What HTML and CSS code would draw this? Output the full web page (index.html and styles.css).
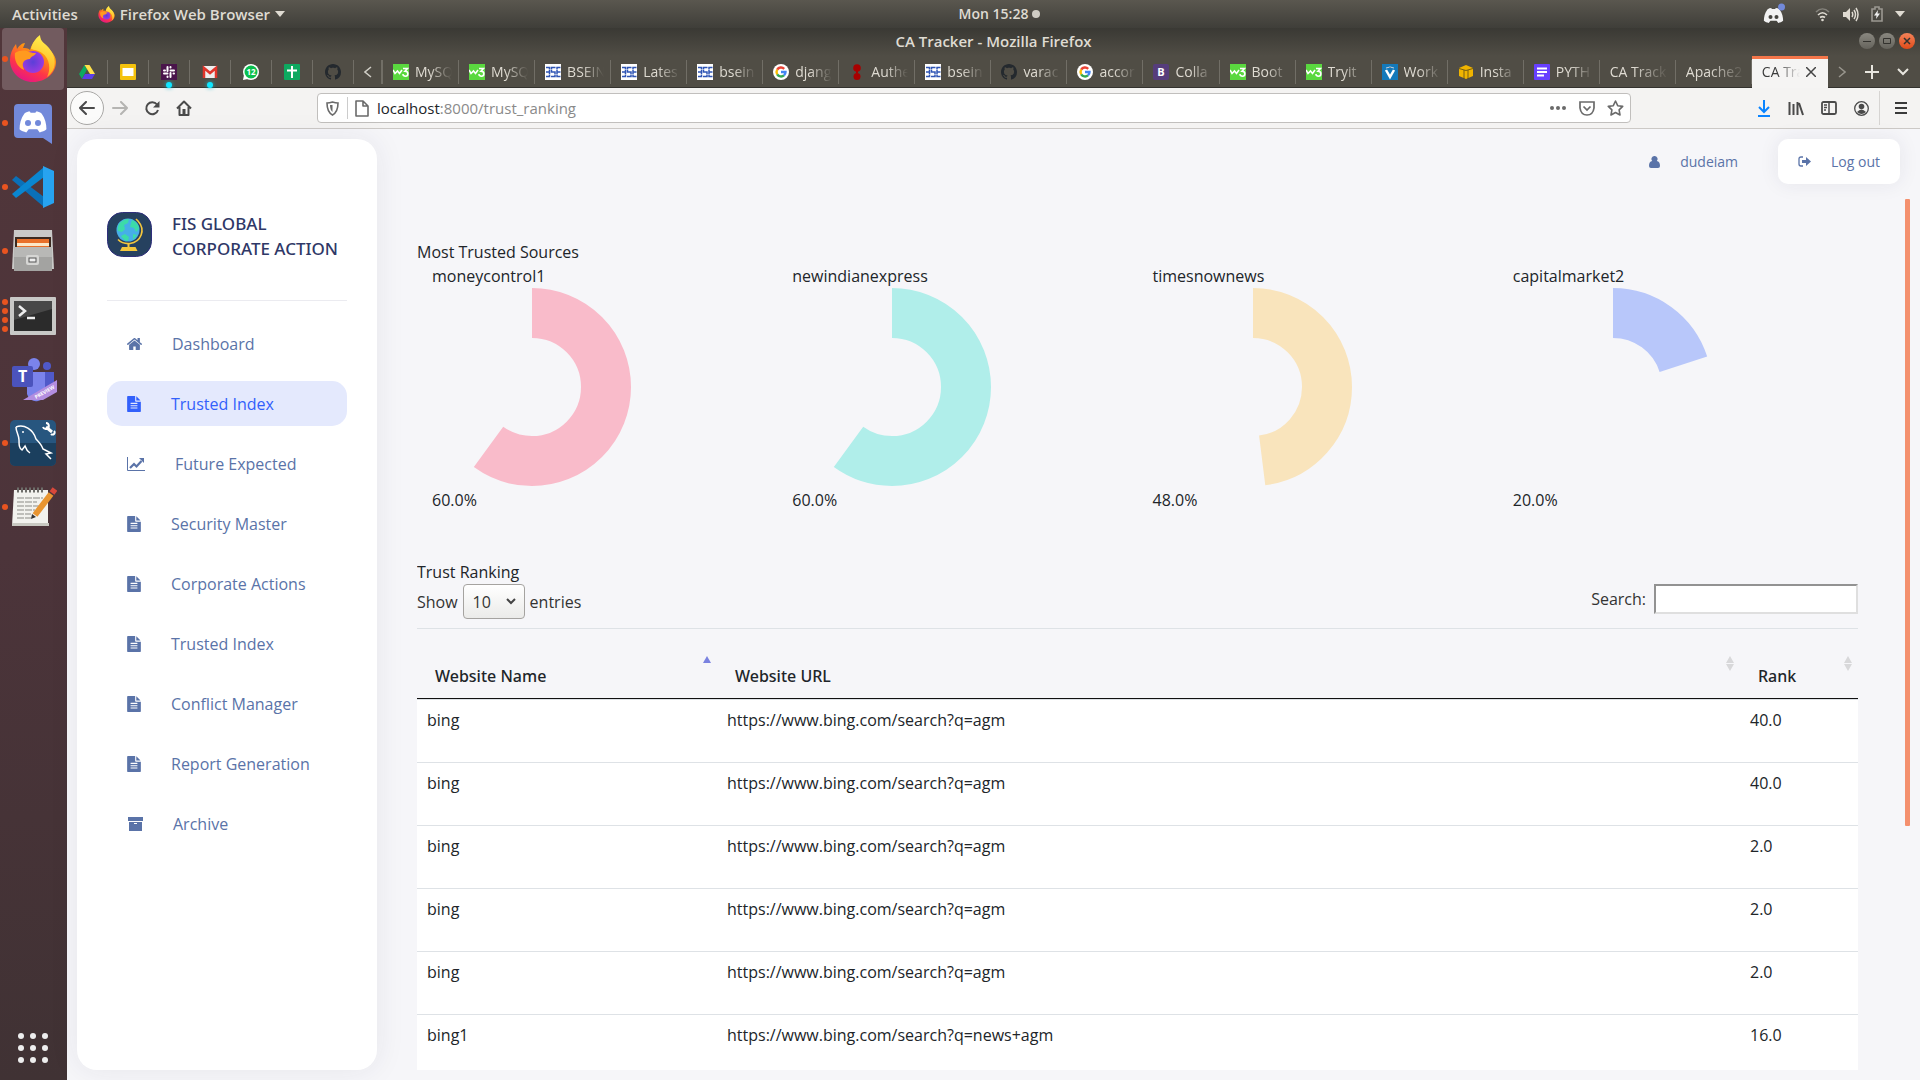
FILE: index.html
```html
<!DOCTYPE html>
<html lang="en">
<head>
<meta charset="utf-8">
<title>CA Tracker</title>
<link rel="stylesheet" href="styles.css">
</head>
<body>
<svg class="sprite" aria-hidden="true">
  <defs>
    <linearGradient id="fx-body" x1="0.8" y1="0" x2="0.3" y2="1"><stop offset="0" stop-color="#fff44f"/><stop offset="0.35" stop-color="#ff980e"/><stop offset="0.7" stop-color="#ff3647"/><stop offset="1" stop-color="#e31587"/></linearGradient>
    <radialGradient id="fx-core"><stop offset="0" stop-color="#5b3fd8"/><stop offset="1" stop-color="#9a3be0"/></radialGradient>
    <linearGradient id="fx-flame" x1="0.6" y1="0" x2="0.4" y2="1"><stop offset="0" stop-color="#fff44f"/><stop offset="1" stop-color="#ffa61b"/></linearGradient>
    <symbol id="firefox" viewBox="0 0 48 48">
      <path fill="url(#fx-body)" d="M24 47C11 47 1 37 1 25c0-6 2-11 6-16l1 5c2-3 5-6 8-6l-2 5c2 0 5 0 7 2 2-6 5-11 10-14 0 7 5 8 9 13 4 4 7 8 7 13 0 11-10 20-23 20z"/>
      <path fill="url(#fx-flame)" d="M22 14C23 8 27 3 31 0c0 7 5 8 9 13 8 10 8 22-2 29 4-7 3-19-5-24-4-3-8-3-11-4z"/>
      <circle cx="24" cy="27" r="11" fill="url(#fx-core)"/>
      <path fill="#ff9a1f" d="M6 18c5-3 10-3 14-1 3 1 5 1 7 1-1 3-5 3-6 6-3 0-6 1-7 4-1 3 1 5 1 7C8 32 5 25 6 18z"/>
    </symbol>
    <symbol id="discord-face" viewBox="0 0 48 36">
      <path d="M10 4C13 2 16 1 19 1l1 2h8l1-2c3 0 6 1 9 3 6 8 8 17 8 26-3 3-7 4-11 5l-3-4-1-1H17l-4 5C9 34 5 33 2 30 2 21 4 12 10 4z"/>
    </symbol>
    <symbol id="file" viewBox="128 0 1536 1792"><path fill="currentColor" d="M1596 476q14 14 28 36h-472v-472q22 14 36 28zm-476 164h544v1056q0 40-28 68t-68 28h-1344q-40 0-68-28t-28-68v-1600q0-40 28-68t68-28h800v544q0 40 28 68t68 28zm160 736v-64q0-14-9-23t-23-9h-704q-14 0-23 9t-9 23v64q0 14 9 23t23 9h704q14 0 23-9t9-23zm0-256v-64q0-14-9-23t-23-9h-704q-14 0-23 9t-9 23v64q0 14 9 23t23 9h704q14 0 23-9t9-23zm0-256v-64q0-14-9-23t-23-9h-704q-14 0-23 9t-9 23v64q0 14 9 23t23 9h704q14 0 23-9t9-23z"/></symbol>
    <symbol id="github" viewBox="0 0 16 16"><path fill="#24292e" d="M8 0C3.58 0 0 3.58 0 8c0 3.54 2.29 6.53 5.47 7.59.4.07.55-.17.55-.38 0-.19-.01-.82-.01-1.49-2.01.37-2.53-.49-2.69-.94-.09-.23-.48-.94-.82-1.13-.28-.15-.68-.52-.01-.53.63-.01 1.08.58 1.23.82.72 1.21 1.87.87 2.33.66.07-.52.28-.87.51-1.07-1.78-.2-3.64-.89-3.64-3.95 0-.87.31-1.59.82-2.15-.08-.2-.36-1.02.08-2.12 0 0 .67-.21 2.2.82.64-.18 1.32-.27 2-.27s1.36.09 2 .27c1.53-1.04 2.2-.82 2.2-.82.44 1.1.16 1.92.08 2.12.51.56.82 1.27.82 2.15 0 3.07-1.87 3.75-3.65 3.95.29.25.54.73.54 1.48 0 1.07-.01 1.93-.01 2.2 0 .21.15.46.55.38A8.01 8.01 0 0 0 16 8c0-4.42-3.58-8-8-8z"/></symbol>
    <symbol id="w3" viewBox="0 0 16 16"><rect width="16" height="16" fill="#5ad83f"/><path fill="none" stroke="#fff" stroke-width="1.600" d="M0 6l2 3.500L4.500 7l2 2.500L9 6M10 4.500h4.500l-2.500 2.700c4 0 3.500 5 .5 5-2 0-2.500-1-2.700-2"/></symbol>
    <symbol id="bse" viewBox="0 0 16 16"><rect width="16" height="16" fill="#fff"/><path fill="none" stroke="#2f55b5" stroke-width="1.500" d="M1 3.500h3.500v9H1M1 8h3.500M10.500 3.500H6.500V8H10v4.500H6M15.500 3.500h-3.500v9h3.500M12 8h3.500"/><path stroke="#fff" stroke-width=".5" d="M0 5.500h16M0 10.500h16"/></symbol>
    <symbol id="google" viewBox="0 0 16 16"><circle cx="8" cy="8" r="8" fill="#fff"/><g fill="none" stroke-width="2.400"><path stroke="#ea4335" d="M11.200 4.800A4.500 4.500 0 0 0 4.200 5.700"/><path stroke="#fbbc05" d="M4.200 5.700a4.500 4.500 0 0 0 0 4.600"/><path stroke="#34a853" d="M4.200 10.300a4.500 4.500 0 0 0 6.800 1.100"/><path stroke="#4285f4" d="M11 11.400A4.500 4.500 0 0 0 12.500 8H8"/></g></symbol>
  </defs>
</svg>

<div class="desktop">
  <header class="topbar">
    <div class="topbar-left">
      <button class="plain">Activities</button>
      <button class="plain app-menu"><svg width="17" height="17"><use href="#firefox"/></svg>Firefox Web Browser<svg width="10" height="6"><path fill="currentColor" d="M0 0h10L5 6z"/></svg></button>
    </div>
    <div class="clock">Mon 15:28<span class="clock-dot"></span></div>
    <div class="tray">
      <svg class="tray-discord" width="22" height="22" viewBox="0 0 22 22"><use href="#discord-face" x="0" y="3" width="21" height="19" fill="#f2f2f2"/><circle cx="7.500" cy="14" r="2" fill="#45443f"/><circle cx="13.500" cy="14" r="2" fill="#45443f"/><circle cx="18.500" cy="4" r="3.500" fill="#7289da"/></svg>
      <svg width="15" height="15" viewBox="0 0 15 15" fill="none" stroke="#dfdbd2" stroke-width="1.600"><path stroke="#85837c" d="M1 5c4-4 9-4 13 0"/><path d="M3 8c3-3 6-3 9 0M5 10.500c2-1.500 3-1.500 5 0"/><circle cx="7.500" cy="13" r="1.300" fill="#dfdbd2" stroke="none"/></svg>
      <svg width="17" height="15" viewBox="0 0 17 15"><path fill="#dfdbd2" d="M1 5h3l4-4v13l-4-4H1z"/><path fill="none" stroke="#dfdbd2" stroke-width="1.500" d="M10 5q1.500 2.500 0 5M12 3q3 4.500 0 9M14 1q4 6.500 0 13"/></svg>
      <svg width="12" height="16" viewBox="0 0 12 16"><path fill="none" stroke="#9b9891" stroke-width="1.600" d="M1 3h3V1h4v2h3v12H1z"/><path fill="#eee" d="M7 4L3 9.500h2.500L5 13l4-5.500H6.500z"/></svg>
      <svg width="10" height="6"><path fill="#dfdbd2" d="M0 0h10L5 6z"/></svg>
    </div>
  </header>

  <nav class="dock" aria-label="Dock">
    <button class="dock-item active" aria-label="Firefox"><span class="pips"><i></i></span><svg width="48" height="48"><use href="#firefox"/></svg></button>
    <button class="dock-item" aria-label="Discord"><span class="pips"><i></i></span>
      <svg width="48" height="48" viewBox="0 0 48 48"><path fill="#7289da" d="M9 5h30a4 4 0 0 1 4 4v36l-9-6H9a4 4 0 0 1-4-4V9a4 4 0 0 1 4-4z"/><use href="#discord-face" x="9" y="12" width="30" height="22" fill="#fff"/><circle cx="19" cy="24" r="3" fill="#7289da"/><circle cx="29" cy="24" r="3" fill="#7289da"/></svg></button>
    <button class="dock-item" aria-label="Visual Studio Code"><span class="pips"><i></i></span>
      <svg width="48" height="48" viewBox="0 0 48 48"><path fill="#0a70b8" d="M3 17l4-4 28 21v10z"/><path fill="#0a86d0" d="M3 31l4 4 28-21V4z"/><path fill="#27a3f0" d="M34 3l11 5v32l-11 5z"/></svg></button>
    <button class="dock-item" aria-label="Files"><span class="pips"><i></i></span>
      <svg width="48" height="48" viewBox="0 0 48 48"><path fill="#c9c9c7" d="M5 3h38l2 39H3z"/><path fill="#3b2a20" d="M6 10h36v10H6z"/><path fill="#e8702a" d="M8 12h32v8H8z"/><path fill="#fbe7c8" d="M8 16h32v3H8z"/><path fill="#a3a3a1" d="M5 20h38v24H5z"/><path fill="#b8b8b6" d="M5 20h38v10H5z"/><rect x="17" y="28" width="13" height="10" rx="2" fill="#d6d6d4"/><rect x="20" y="31" width="7" height="4" fill="#eee" stroke="#555"/></svg></button>
    <button class="dock-item" aria-label="Terminal"><span class="pips"><i></i><i></i><i></i><i></i></span>
      <svg width="48" height="48" viewBox="0 0 48 48"><rect x="1" y="6" width="46" height="38" rx="1" fill="#c8c8c6"/><rect x="5" y="10" width="38" height="30" fill="#2b2b2b"/><path fill="#484848" d="M5 10h38v8L5 29z"/><path fill="none" stroke="#eee" stroke-width="2.500" d="M10 15l6 5-6 5M18 27h8"/></svg></button>
    <button class="dock-item" aria-label="Teams"><span class="pips"></span>
      <svg width="48" height="48" viewBox="0 0 48 48"><circle cx="25" cy="9" r="6" fill="#7b83eb"/><circle cx="38" cy="11" r="4" fill="#5059c9"/><path fill="#5059c9" d="M34 17h11v16a8 8 0 0 1-11 7z"/><path fill="#7b83eb" d="M18 17h18v18a9 9 0 0 1-18 4z"/><rect x="3" y="11" width="21" height="21" rx="2" fill="#4b53bc"/><text x="9" y="27" font-family="Open Sans" font-weight="700" font-size="16" fill="#fff">T</text><path fill="#b38ee0" d="M14 45L48 25v12L34 45z"/><text x="27" y="44" font-family="Open Sans" font-weight="700" font-size="5" fill="#fff" transform="rotate(-30 27 44)">PREVIEW</text></svg></button>
    <button class="dock-item" aria-label="MySQL Workbench"><span class="pips"><i></i></span>
      <svg width="48" height="48" viewBox="0 0 48 48"><rect x="1" y="1" width="46" height="46" rx="5" fill="#27567f"/><path fill="#1b3f5e" d="M1 24h46v18a5 5 0 0 1-5 5H6a5 5 0 0 1-5-5z"/><path fill="none" stroke="#fff" stroke-width="1.500" d="M7 8c8-3 17 2 20 12 3 3 6 7 7 10l8 4-5 1 5 5M7 8c0 5 3 8 3 13 0 5 0 8 3 10l3-4c1 3 2 5 5 7"/><circle cx="14" cy="13" r="1" fill="#fff"/><path stroke="#fff" stroke-width="3" d="M37 8l6 5"/><path fill="none" stroke="#fff" stroke-width="2" d="M34 8a3 3 0 1 0 3-4M42 15a2 2 0 1 0 3-3"/></svg></button>
    <button class="dock-item" aria-label="Notes"><span class="pips"><i></i></span>
      <svg width="48" height="48" viewBox="0 0 48 48"><path fill="#f2f2ee" d="M5 7h34v36H3z"/><path fill="#c9c9c2" d="M3 40h37v3H3z"/><path fill="none" stroke="#8b8b86" stroke-dasharray="7 1" d="M8 15h26M8 19h20M8 23h24M8 27h18M8 31h14M8 35h14"/><path stroke="#6e6e6a" stroke-width="5" stroke-dasharray="2 2" d="M8 7h28"/><path stroke="#e89531" stroke-width="6" d="M26 32L42 11"/><path stroke="#d8483b" stroke-width="6" d="M43 10l3-4"/><path fill="#333" d="M22 36l1-5 4 3z"/></svg></button>
    <button class="show-apps" aria-label="Show applications"><i></i><i></i><i></i><i></i><i></i><i></i><i></i><i></i><i></i></button>
  </nav>

  <section class="window">
    <div class="titlebar">
      <span class="window-title">CA Tracker - Mozilla Firefox</span>
      <div class="window-buttons">
        <button aria-label="Minimise"><svg width="8" height="8"><path stroke="#33322e" d="M0 4.500h8"/></svg></button>
        <button aria-label="Maximise"><svg width="8" height="8"><path fill="none" stroke="#33322e" d="M.5 1.500h7v5h-7z"/></svg></button>
        <button class="close" aria-label="Close"><svg width="8" height="8"><path stroke="#33322e" stroke-width="1.500" d="M1 1l6 6M7 1L1 7"/></svg></button>
      </div>
    </div>

    <div class="tabstrip">
      <div class="pinned"><svg width="16" height="16" viewBox="0 0 16 16"><path fill="#0da960" d="M5.500 1L8 5.500 3 15 0 10z"/><path fill="#ffe14a" d="M5.500 1h5l5.500 9h-5z"/><path fill="#5b3fe8" d="M6 10h10l-3 5H3z"/></svg></div>
      <div class="pinned"><svg width="16" height="16" viewBox="0 0 16 16"><rect width="16" height="16" rx="1" fill="#f4c20d"/><rect x="2.500" y="4" width="11" height="8" fill="#fff"/></svg></div>
      <div class="pinned notify"><svg width="16" height="16" viewBox="0 0 16 16"><rect width="16" height="16" fill="#4a154b"/><path stroke="#fff" stroke-width="2" stroke-linecap="round" d="M6.500 3v4M3 6.500h1M9.500 3v.5M9.500 6.500H13M9.500 9v4M12.500 9.500h.5M3 9.500h3.500M6.500 12.500v.5"/></svg></div>
      <div class="pinned notify"><svg width="16" height="16" viewBox="0 0 16 16"><rect x="1" y="2" width="14" height="12" fill="#eee"/><path fill="none" stroke="#e0352b" stroke-width="2.500" d="M2 14V4l6 5 6-5v10"/></svg></div>
      <div class="pinned"><svg width="16" height="16" viewBox="0 0 16 16"><circle cx="8" cy="8" r="8" fill="#fff"/><path fill="#fff" d="M0 16l1-5 4 4z"/><circle cx="8" cy="8" r="6.500" fill="#0abf4e"/><text x="8" y="11" text-anchor="middle" font-family="Open Sans" font-weight="700" font-size="8" fill="#fff">12</text></svg></div>
      <div class="pinned"><svg width="16" height="16" viewBox="0 0 16 16"><rect width="16" height="16" rx="1" fill="#0da960"/><path stroke="#fff" stroke-width="2" d="M8 2v12M3 6.500h10"/></svg></div>
      <div class="pinned"><svg width="16" height="16"><use href="#github"/></svg></div>
      <button class="scroll-left" aria-label="Scroll tabs left"><svg width="8" height="12"><path fill="none" stroke="#d0cec6" stroke-width="1.500" d="M7 1L1 6l6 5"/></svg></button>
      <div class="tabs">
        <div class="tab"><svg width="16" height="16"><use href="#w3"/></svg><span>MySQ</span></div>
        <div class="tab"><svg width="16" height="16"><use href="#w3"/></svg><span>MySQ</span></div>
        <div class="tab"><svg width="16" height="16"><use href="#bse"/></svg><span>BSEIN</span></div>
        <div class="tab"><svg width="16" height="16"><use href="#bse"/></svg><span>Lates</span></div>
        <div class="tab"><svg width="16" height="16"><use href="#bse"/></svg><span>bsein</span></div>
        <div class="tab"><svg width="16" height="16"><use href="#google"/></svg><span>djang</span></div>
        <div class="tab"><svg width="16" height="16" viewBox="0 0 16 16"><circle cx="8" cy="4" r="3.800" fill="#a80000"/><circle cx="8" cy="12.500" r="3.500" fill="#a80000"/><path stroke="#a80000" stroke-width="2" d="M8 7v2"/></svg><span>Authe</span></div>
        <div class="tab"><svg width="16" height="16"><use href="#bse"/></svg><span>bsein</span></div>
        <div class="tab"><svg width="16" height="16"><use href="#github"/></svg><span>varac</span></div>
        <div class="tab"><svg width="16" height="16"><use href="#google"/></svg><span>accor</span></div>
        <div class="tab"><svg width="16" height="16" viewBox="0 0 16 16"><rect width="16" height="16" rx="2" fill="#563d7c"/><text x="8" y="12" text-anchor="middle" font-family="Open Sans" font-weight="700" font-size="11" fill="#fff">B</text></svg><span>Colla</span></div>
        <div class="tab"><svg width="16" height="16"><use href="#w3"/></svg><span>Boot</span></div>
        <div class="tab"><svg width="16" height="16"><use href="#w3"/></svg><span>Tryit</span></div>
        <div class="tab"><svg width="16" height="16" viewBox="0 0 16 16"><rect width="16" height="16" fill="#1479ba"/><path fill="none" stroke="#fff" stroke-width="2.500" d="M4 6l4 7 4-7"/><path stroke="#cde" d="M4 4q4-2 8 0"/></svg><span>Work</span></div>
        <div class="tab"><svg width="16" height="16" viewBox="0 0 16 16"><path fill="#f0b400" d="M1 4l7-3 7 3v8l-7 3-7-3z"/><path fill="none" stroke="#5b4a16" stroke-width=".8" d="M1 4.500l7 2 7-2M6 6v9M10 6v9"/></svg><span>Insta</span></div>
        <div class="tab"><svg width="16" height="16" viewBox="0 0 16 16"><rect width="16" height="16" rx="1" fill="#673fff"/><path stroke="#fff" stroke-width="1.800" d="M3 4.500h10M3 8h10M3 11.500h7"/></svg><span>PYTH</span></div>
        <div class="tab"><span>CA Track</span></div>
        <div class="tab"><span>Apache2</span></div>
        <div class="tab current"><span>CA Tra</span><button class="plain" aria-label="Close tab"><svg width="10" height="10"><path stroke="#444" stroke-width="1.500" d="M0 0l10 10M10 0L0 10"/></svg></button></div>
      </div>
      <div class="tab-tools">
        <button class="plain" aria-label="Scroll tabs right"><svg width="8" height="12"><path fill="none" stroke="#98958d" stroke-width="1.500" d="M1 1l6 5-6 5"/></svg></button>
        <button class="plain" aria-label="New tab"><svg width="14" height="14"><path stroke="#e8e6df" stroke-width="2" d="M7 0v14M0 7h14"/></svg></button>
        <button class="plain" aria-label="List tabs"><svg width="12" height="8"><path fill="none" stroke="#e8e6df" stroke-width="2" d="M1 1l5 5 5-5"/></svg></button>
      </div>
    </div>

    <div class="toolbar">
      <div class="nav-buttons">
        <button class="back" aria-label="Back"><svg width="16" height="14"><path fill="none" stroke="#4a4a4a" stroke-width="2" stroke-linecap="round" d="M15 7H1M7 1L1 7l6 6"/></svg></button>
        <button class="plain" aria-label="Forward"><svg width="16" height="14"><path fill="none" stroke="#b5b4b2" stroke-width="2" stroke-linecap="round" d="M1 7h14M9 1l6 6-6 6"/></svg></button>
        <button class="plain" aria-label="Reload"><svg width="16" height="16"><path fill="none" stroke="#4a4a4a" stroke-width="2" d="M13 4.500A6 6 0 1 0 14 10"/><path fill="#4a4a4a" d="M15.500 1v6.500H9z"/></svg></button>
        <button class="plain" aria-label="Home"><svg width="16" height="16"><path fill="none" stroke="#4a4a4a" stroke-width="2" stroke-linejoin="round" d="M1 8.500L8 1.500l7 7M3.500 7v8h9V7"/><path fill="#4a4a4a" d="M6.500 9h3v6h-3z"/></svg></button>
      </div>
      <div class="urlbar">
        <svg width="13" height="15"><path fill="none" stroke="#6a6a6a" stroke-width="1.600" d="M6.500 1q3 1 5.500 1 0 9-5.500 12Q1 11 1 2q2.500 0 5.500-1z"/><path fill="#6a6a6a" d="M6.500 4H4q0 5 2.500 7z"/></svg>
        <span class="url-split"></span>
        <svg width="15" height="17"><path fill="none" stroke="#6a6a6a" stroke-width="1.600" stroke-linejoin="round" d="M2 1h7l5 5v10H2zM9 1v5h5"/></svg>
        <div class="url" role="textbox" aria-label="Address">localhost<span>:8000/trust_ranking</span></div>
        <svg width="18" height="4"><g fill="#6a6a6a"><circle cx="3" cy="2" r="2"/><circle cx="9" cy="2" r="2"/><circle cx="15" cy="2" r="2"/></g></svg>
        <svg width="16" height="15"><path fill="none" stroke="#6a6a6a" stroke-width="1.700" d="M1 1h14v6q-1 7-7 7T1 7zM4.500 5.500L8 9l3.500-3.500"/></svg>
        <svg width="17" height="16"><path fill="none" stroke="#6a6a6a" stroke-width="1.600" stroke-linejoin="round" d="M8.500 1l2.200 4.700 5 .7-3.600 3.500.9 5.100-4.500-2.500L4 15l.9-5.100L1.300 6.400l5-.7z"/></svg>
      </div>
      <div class="tool-buttons">
        <button class="plain" aria-label="Downloads"><svg width="14" height="17"><path fill="none" stroke="#0a84ff" stroke-width="2" d="M7 0v12M2 7l5 5 5-5M1 16h12"/></svg></button>
        <button class="plain" aria-label="Library"><svg width="16" height="15"><path stroke="#4a4a4a" stroke-width="2" d="M1.500 1v13M5.500 3v11M9.500 1v13M11 2l4 12"/></svg></button>
        <button class="plain" aria-label="Sidebars"><svg width="16" height="14"><rect x="1" y="1" width="14" height="12" rx="1.500" fill="none" stroke="#4a4a4a" stroke-width="1.800"/><path stroke="#4a4a4a" stroke-width="1.500" d="M8 1v12M3 4h3M3 6.500h3M3 9h2"/></svg></button>
        <button class="plain" aria-label="Account"><svg width="15" height="15"><circle cx="7.500" cy="7.500" r="6.800" fill="none" stroke="#4a4a4a" stroke-width="1.300"/><circle cx="7.500" cy="5.500" r="2.800" fill="#4a4a4a"/><path fill="#4a4a4a" d="M3 11q4.500-5 9 0-4.500 4-9 0z"/></svg></button>
        <span class="tool-split"></span>
        <button class="plain" aria-label="Menu"><svg width="12" height="12"><path stroke="#3a3a3a" stroke-width="2" d="M0 1h12M0 6h12M0 11h12"/></svg></button>
      </div>
    </div>

    <div class="page">
      <aside class="sidebar">
        <div class="brand">
          <svg width="45" height="45" viewBox="0 0 45 45"><rect x=".5" y=".5" width="44" height="44" rx="15" fill="#26415f" stroke="#2f2f7c"/><path fill="none" stroke="#f5c73c" stroke-width="1.600" d="M29 7l2 2c8 9 3 21-8 22.500-5 .5-9-1-12-4"/><circle cx="21" cy="18" r="11.500" fill="#46aee8"/><path fill="#3cdba8" d="M12 12c3-4 7-5 10-5l-1 4-4 2 1 4-3 3-4-1c-1-2 0-5 1-7zM25 8c5 2 7 6 7 9l-3 3-2-4-4-1 1-4zM14 24l4-2 4 3-1 4c-3 0-5-2-7-5zM26 22l4 1-4 5z"/><path fill="#f5c73c" d="M20.500 31h2v4h6l2 4H13l2-4h5.500z"/></svg>
          <h1>FIS GLOBAL<br>CORPORATE ACTION</h1>
        </div>
        <nav class="menu">
          <a href="#dashboard"><svg width="15" height="12" viewBox="96 256 1600 1280"><path fill="currentColor" d="M1472 992v480q0 26-19 45t-45 19h-384v-384h-256v384h-384q-26 0-45-19t-19-45v-480q0-1 .5-3t.5-3l575-474 575 474q1 2 1 6zm223-69l-62 74q-8 9-21 11h-3q-13 0-21-7l-692-577-692 577q-12 8-24 7-13-2-21-11l-62-74q-8-10-7-23.500t11-21.500l719-599q32-26 76-26t76 26l244 204v-195q0-14 9-23t23-9h192q14 0 23 9t9 23v408l219 182q10 8 11 21.500t-7 23.500z"/></svg>Dashboard</a>
          <a href="#trusted" class="selected"><svg width="14" height="16"><use href="#file"/></svg>Trusted Index</a>
          <a href="#future"><svg width="18" height="14"><path fill="none" stroke="currentColor" d="M.5 0v13.500H18"/><path fill="none" stroke="currentColor" stroke-width="2.200" d="M3 11l4-4 2.500 2.500 5-5.500"/><path fill="currentColor" d="M17 1v5l-5-5z"/></svg>Future Expected</a>
          <a href="#security"><svg width="14" height="16"><use href="#file"/></svg>Security Master</a>
          <a href="#actions"><svg width="14" height="16"><use href="#file"/></svg>Corporate Actions</a>
          <a href="#index"><svg width="14" height="16"><use href="#file"/></svg>Trusted Index</a>
          <a href="#conflict"><svg width="14" height="16"><use href="#file"/></svg>Conflict Manager</a>
          <a href="#report"><svg width="14" height="16"><use href="#file"/></svg>Report Generation</a>
          <a href="#archive"><svg width="16" height="14"><path fill="currentColor" d="M1 0h15v4H1z"/><path fill="currentColor" fill-rule="evenodd" d="M2 5h13v9H2zM7 6v1h3V6z"/></svg>Archive</a>
        </nav>
      </aside>

      <div class="content">
        <div class="account-bar">
          <a class="account" href="#profile"><svg width="11" height="12"><path fill="currentColor" d="M5.500 0a3 3 0 0 1 2.300 5C10 5.500 11 7 11 10q0 2-2 2H2q-2 0-2-2c0-3 1-4.500 3.200-5A3 3 0 0 1 5.500 0z"/></svg>dudeiam</a>
          <button class="logout"><svg width="13" height="11"><path fill="none" stroke="currentColor" stroke-width="1.300" d="M5 1H3Q1 1 1 3v5q0 2 2 2h2"/><path fill="currentColor" d="M4 4h4V1l5 4.500L8 10V7H4z"/></svg>Log out</button>
        </div>
        <div class="viewport">
          <main class="scroller">
            <h2>Most Trusted Sources</h2>
            <div class="sources">
              <section class="source"><h3>moneycontrol1</h3><svg viewBox="0 0 200 200"><circle class="arc" stroke="#f9bbca" pathLength="100" stroke-dasharray="60 100" cx="100" cy="99" r="74" transform="rotate(-90 100 99)"/></svg><p>60.0%</p></section>
              <section class="source"><h3>newindianexpress</h3><svg viewBox="0 0 200 200"><circle class="arc" stroke="#b0eeea" pathLength="100" stroke-dasharray="60 100" cx="100" cy="99" r="74" transform="rotate(-90 100 99)"/></svg><p>60.0%</p></section>
              <section class="source"><h3>timesnownews</h3><svg viewBox="0 0 200 200"><circle class="arc" stroke="#f9e4bc" pathLength="100" stroke-dasharray="48 100" cx="100" cy="99" r="74" transform="rotate(-90 100 99)"/></svg><p>48.0%</p></section>
              <section class="source"><h3>capitalmarket2</h3><svg viewBox="0 0 200 200"><circle class="arc" stroke="#b8c7fa" pathLength="100" stroke-dasharray="20 100" cx="100" cy="99" r="74" transform="rotate(-90 100 99)"/></svg><p>20.0%</p></section>
            </div>
            <h2>Trust Ranking</h2>
            <div class="controls">
              <label class="length">Show
                <span class="select-box"><select><option>10</option><option>25</option><option>50</option></select><svg width="10" height="7"><path fill="none" stroke="#444" stroke-width="2" d="M1 1l4 4 4-4"/></svg></span>
                entries</label>
              <label class="search">Search:<input type="search"></label>
            </div>
            <table>
              <colgroup><col class="col-name"><col><col class="col-rank"></colgroup>
              <thead><tr>
                <th>Website Name<svg class="sort" width="10" height="16"><path fill="#7a82e0" d="M5 0l4 7H1z"/></svg></th>
                <th>Website URL<svg class="sort" width="10" height="16"><path fill="#d8d8da" d="M5 0l4 7H1zM1 8h8l-4 7z"/></svg></th>
                <th>Rank<svg class="sort" width="10" height="16"><path fill="#d8d8da" d="M5 0l4 7H1zM1 8h8l-4 7z"/></svg></th>
              </tr></thead>
              <tbody>
                <tr><td>bing</td><td>https://www.bing.com/search?q=agm</td><td>40.0</td></tr>
                <tr><td>bing</td><td>https://www.bing.com/search?q=agm</td><td>40.0</td></tr>
                <tr><td>bing</td><td>https://www.bing.com/search?q=agm</td><td>2.0</td></tr>
                <tr><td>bing</td><td>https://www.bing.com/search?q=agm</td><td>2.0</td></tr>
                <tr><td>bing</td><td>https://www.bing.com/search?q=agm</td><td>2.0</td></tr>
                <tr><td>bing1</td><td>https://www.bing.com/search?q=news+agm</td><td>16.0</td></tr>
              </tbody>
            </table>
          </main>
          <div class="track"><div class="thumb"></div></div>
        </div>
      </div>
    </div>
  </section>
</div>
</body>
</html>
```
FILE: styles.css
```css
* { box-sizing: border-box; }

body {
  margin: 0;
  font: 16px/24px "Open Sans", "Noto Sans", sans-serif;
  color: #212529;
}

h1, h2, h3, p { margin: 0; font-size: 16px; font-weight: 400; }
svg { display: block; flex: none; }
button, input, select { font: inherit; color: inherit; }
a { color: inherit; text-decoration: none; }
.sprite { position: absolute; width: 0; height: 0; }
.plain { display: flex; align-items: center; padding: 0; border: 0; background: none; }

/* Desktop shell */
.desktop {
  display: grid;
  grid-template: auto minmax(0, 1fr) / 67px minmax(0, 1fr);
  height: 100vh;
}

.topbar {
  grid-column: 1 / -1;
  display: grid;
  grid-template-columns: 1fr auto 1fr;
  align-items: center;
  height: 28px;
  padding: 0 15px 0 12px;
  background: linear-gradient(#5a574f, #3f3e39);
  color: #dfdbd2;
  font-size: 14px;
  line-height: 20px;
  font-weight: 600;
}
.topbar-left { display: flex; gap: 20px; font-size: 15px; }
.app-menu { gap: 5px; }
.clock { display: flex; align-items: center; gap: 4px; padding-left: 82px; }
.clock-dot { width: 8px; height: 8px; border-radius: 50%; background: #cfccc4; }
.tray { display: flex; justify-content: flex-end; align-items: center; gap: 12px; }
.tray-discord { margin-right: 18px; }

.dock {
  display: flex;
  flex-direction: column;
  gap: 2px;
  padding: 0 3px 17px 2px;
  background: linear-gradient(#51363a, #4c343a 50%, #403234);
}
.dock-item {
  position: relative;
  display: grid;
  place-items: center;
  height: 62px;
  padding: 0;
  border: 0;
  border-radius: 4px;
  background: none;
}
.dock-item.active { background: #725b5f; }
.pips { position: absolute; left: 0; top: 0; height: 100%; display: flex; flex-direction: column; justify-content: center; gap: 3px; }
.pips i { width: 6px; height: 6px; border-radius: 50%; background: #e95420; }
.show-apps {
  display: grid;
  grid-template-columns: repeat(3, 6px);
  gap: 6px;
  justify-content: center;
  margin-top: auto;
  padding: 0;
  border: 0;
  background: none;
}
.show-apps i { height: 6px; border-radius: 50%; background: #eee; }

/* Browser window */
.window { display: flex; flex-direction: column; min-height: 0; background: #f6f6f9; }

.titlebar {
  position: relative;
  display: flex;
  justify-content: center;
  align-items: center;
  height: 28px;
  background: linear-gradient(#3a3934, #504d45);
}
.window-title { color: #dfdbd2; font-size: 15px; line-height: 26px; font-weight: 600; padding-bottom: 2px; }
.window-buttons { position: absolute; right: 5px; top: 5px; display: flex; gap: 4px; }
.window-buttons button {
  display: grid;
  place-items: center;
  width: 16px;
  height: 16px;
  padding: 0;
  border: 0;
  border-radius: 50%;
  background: linear-gradient(#8a8880, #65635c);
}
.window-buttons .close { background: linear-gradient(#f58359, #df4b19); }

.tabstrip {
  display: flex;
  align-items: center;
  height: 32px;
  background: #504d45;
  border-bottom: 1px solid #33322e;
  color: #dfdbd2;
  font-size: 14px;
}
.pinned, .tab, .scroll-left { border-right: 1px solid #716e66; height: 24px; display: flex; align-items: center; }
.pinned { position: relative; width: 41px; justify-content: center; }
.notify::after {
  content: "";
  position: absolute;
  left: 17px;
  bottom: -4px;
  width: 6px;
  height: 6px;
  border-radius: 50%;
  background: #0fe6ff;
  box-shadow: 0 0 4px #0fb8d0;
}
.scroll-left { width: 29px; padding: 0; justify-content: center; border-width: 0 2px 0 0; background: none; }
.tabs { flex: 1; display: flex; align-self: stretch; align-items: center; min-width: 0; }
.tab { flex: 1 1 40px; min-width: 0; gap: 6px; padding: 0 6px 0 10px; }
.tab span {
  flex: 1;
  min-width: 0;
  overflow: hidden;
  white-space: nowrap;
  mask-image: linear-gradient(to right, #000 40%, transparent);
}
.tab.current { align-self: stretch; height: 32px; border: 0; background: #f5f4f3; box-shadow: inset 0 3px #f4764a; color: #3b3b3b; padding-right: 12px; }
.tab-tools { display: flex; align-items: center; justify-content: space-between; width: 92px; padding: 0 11px 0 10px; }

.toolbar {
  display: flex;
  align-items: center;
  height: 41px;
  padding: 0 13px 0 3px;
  background: #f4f3f2;
  border-bottom: 1px solid #ccc9c6;
}
.nav-buttons { display: flex; align-items: center; gap: 16px; margin-right: 125px; }
.back { display: grid; place-items: center; width: 34px; height: 34px; margin-right: -8px; padding: 0; border: 1px solid #a9a8a6; border-radius: 50%; background: #fbfbfa; }
.urlbar {
  flex: 1;
  display: flex;
  align-items: center;
  gap: 12px;
  height: 30px;
  padding: 0 6px 0 8px;
  border: 1px solid #c1bfbd;
  border-radius: 4px;
  background: #fff;
  font-size: 15px;
}
.url { flex: 1; margin-left: -4px; }
.url span { color: #8a8a8a; }
.url-split { width: 1px; height: 22px; margin: 0 -6px 0 -4px; background: #ccc; }
.tool-buttons { display: flex; align-items: center; gap: 17px; margin-left: 126px; }
.tool-split { width: 1px; height: 34px; margin-right: -2px; margin-left: -7px; background: #d6d4d2; }

/* Web page */
.page { flex: 1; display: flex; min-height: 0; padding: 10px; }

.sidebar {
  flex: none;
  width: 300px;
  padding: 68px 30px 30px;
  border-radius: 20px;
  background: #fff;
  box-shadow: 0 0 30px rgba(40, 40, 80, 0.08);
}
.brand { display: flex; align-items: center; gap: 20px; padding-bottom: 39px; border-bottom: 1px solid #ebebf0; }
.brand h1 { padding-top: 4px; font: 500 17px/25px "Noto Sans", sans-serif; color: #2f3867; white-space: nowrap; }
.menu { display: flex; flex-direction: column; gap: 15px; margin-top: 20px; color: #5a73a8; }
.menu a { display: flex; align-items: center; gap: 30px; height: 45px; padding-left: 20px; border-radius: 15px; }
.menu .selected { background: #e4e9fd; color: #3260fb; }

.content { flex: 1; min-width: 0; display: flex; flex-direction: column; gap: 15px; padding-left: 40px; }
.account-bar { display: flex; justify-content: flex-end; align-items: center; gap: 40px; padding-right: 10px; color: #5a73a8; font-size: 14px; }
.account { display: flex; align-items: center; gap: 20px; }
.logout {
  display: flex;
  align-items: center;
  gap: 20px;
  height: 45px;
  padding: 0 20px;
  border: 0;
  border-radius: 10px;
  background: #fff;
  box-shadow: 0 0 20px rgba(40, 40, 80, 0.08);
}

.viewport { flex: 1; min-height: 0; display: flex; gap: 47px; }
.scroller { flex: 1; min-width: 0; padding-top: 41px; overflow: hidden; }
.track { width: 5px; }
.thumb { height: 72%; border-radius: 1px; background: #f4906e; }

.sources { display: grid; grid-template-columns: repeat(4, 1fr); margin-bottom: 48px; }
.source { padding: 0 15px; }
.source svg { width: 200px; height: 200px; }
.arc { fill: none; stroke-width: 50; }

.controls { display: flex; justify-content: space-between; align-items: flex-start; height: 44px; color: #333; }
.length { display: flex; align-items: center; gap: 5px; }
.select-box { position: relative; }
.select-box select {
  appearance: none;
  display: block;
  width: 62px;
  height: 35px;
  padding: 0 9px;
  border: 1px solid #a5a3a0;
  border-radius: 4px;
  background: linear-gradient(#fff, #ebebe9);
}
.select-box svg { position: absolute; right: 9px; top: 14px; }
.search { display: flex; align-items: center; gap: 8px; }
.search input { appearance: none; width: 204px; height: 30px; border: 2px solid; border-color: #929292 #dfdfdf #dfdfdf #929292; background: #fff; }

table { width: 100%; border-collapse: separate; border-spacing: 0; table-layout: fixed; }
.col-name { width: 300px; }
.col-rank { width: 118px; }
th {
  position: relative;
  height: 71px;
  padding: 0 18px 10px;
  border-top: 1px solid #dee2e6;
  border-bottom: 1px solid #111;
  text-align: left;
  vertical-align: bottom;
  font-family: "Noto Sans", sans-serif;
  font-weight: 500;
}
.sort { position: absolute; right: 5px; top: 27px; }
td { height: 63px; padding: 8px 10px; border-top: 1px solid #dee2e6; background: #fff; vertical-align: top; }
```
